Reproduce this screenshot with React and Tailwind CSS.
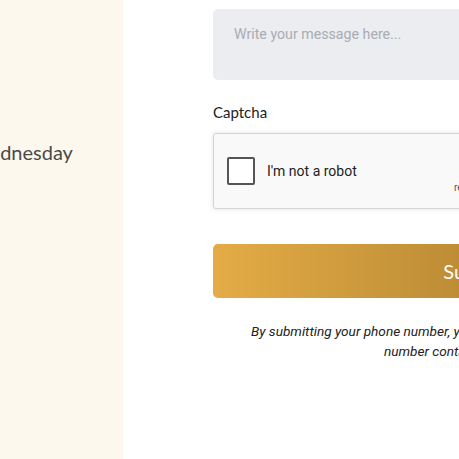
export default function App() {
  return (
    <div className="w-[459px] h-[459px] overflow-hidden flex bg-white font-['Lato',sans-serif]">
      {/* left info panel, cut off by the viewport */}
      <div className="w-[123px] shrink-0 bg-[#fcf8ee] overflow-hidden">
        <p className="pt-[139px] -ml-[30px] whitespace-nowrap text-[20px] leading-[26px] text-[#4a4a4a]">
          Wednesday
        </p>
      </div>

      <div className="flex-1 pl-[90px]">
        <div className="w-[522px] shrink-0 pt-[9px]">
          <textarea
            placeholder="Write your message here..."
            className="block w-full h-[71px] resize-none rounded-[5px] bg-[#ebedf0] px-[21px] pt-[15px] font-['Roboto',sans-serif] text-[14.2px] text-[#333] placeholder:text-[#a9acb2] outline-none"
          />

          <p className="mt-[22px] text-[15px] leading-[20px] text-[#222]">Captcha</p>

          <div className="mt-[11px] w-[304px] h-[76px] flex rounded-[3px] border border-[#d3d3d3] bg-[#f9f9f9] shadow-[0_0_4px_1px_rgba(0,0,0,0.08)] font-['Roboto',sans-serif]">
            <div className="flex-1 flex items-center pl-[13px]">
              <div className="w-[28px] h-[28px] rounded-[2px] border-2 border-[#555] bg-white" />
              <span className="ml-[12px] text-[14px] text-[#222]">I'm not a robot</span>
            </div>
            <div className="w-[70px] flex flex-col items-center justify-end pb-[14px]">
              <span className="text-[10px] leading-[12px] text-[#555]">reCAPTCHA</span>
            </div>
          </div>

          <button className="mt-[35px] w-full h-[54px] rounded-[5px] bg-gradient-to-r from-[#e4ac47] to-[#946b21] text-white text-[20px]">
            Submit
          </button>

          <p className="mt-[23px] text-center italic text-[13.6px] leading-[20px] text-[#222] font-['Roboto',sans-serif]">
            By submitting your phone number, you agree to receive text messages at the
            <br />
            number contained in this form.
          </p>
        </div>
      </div>
    </div>
  );
}
